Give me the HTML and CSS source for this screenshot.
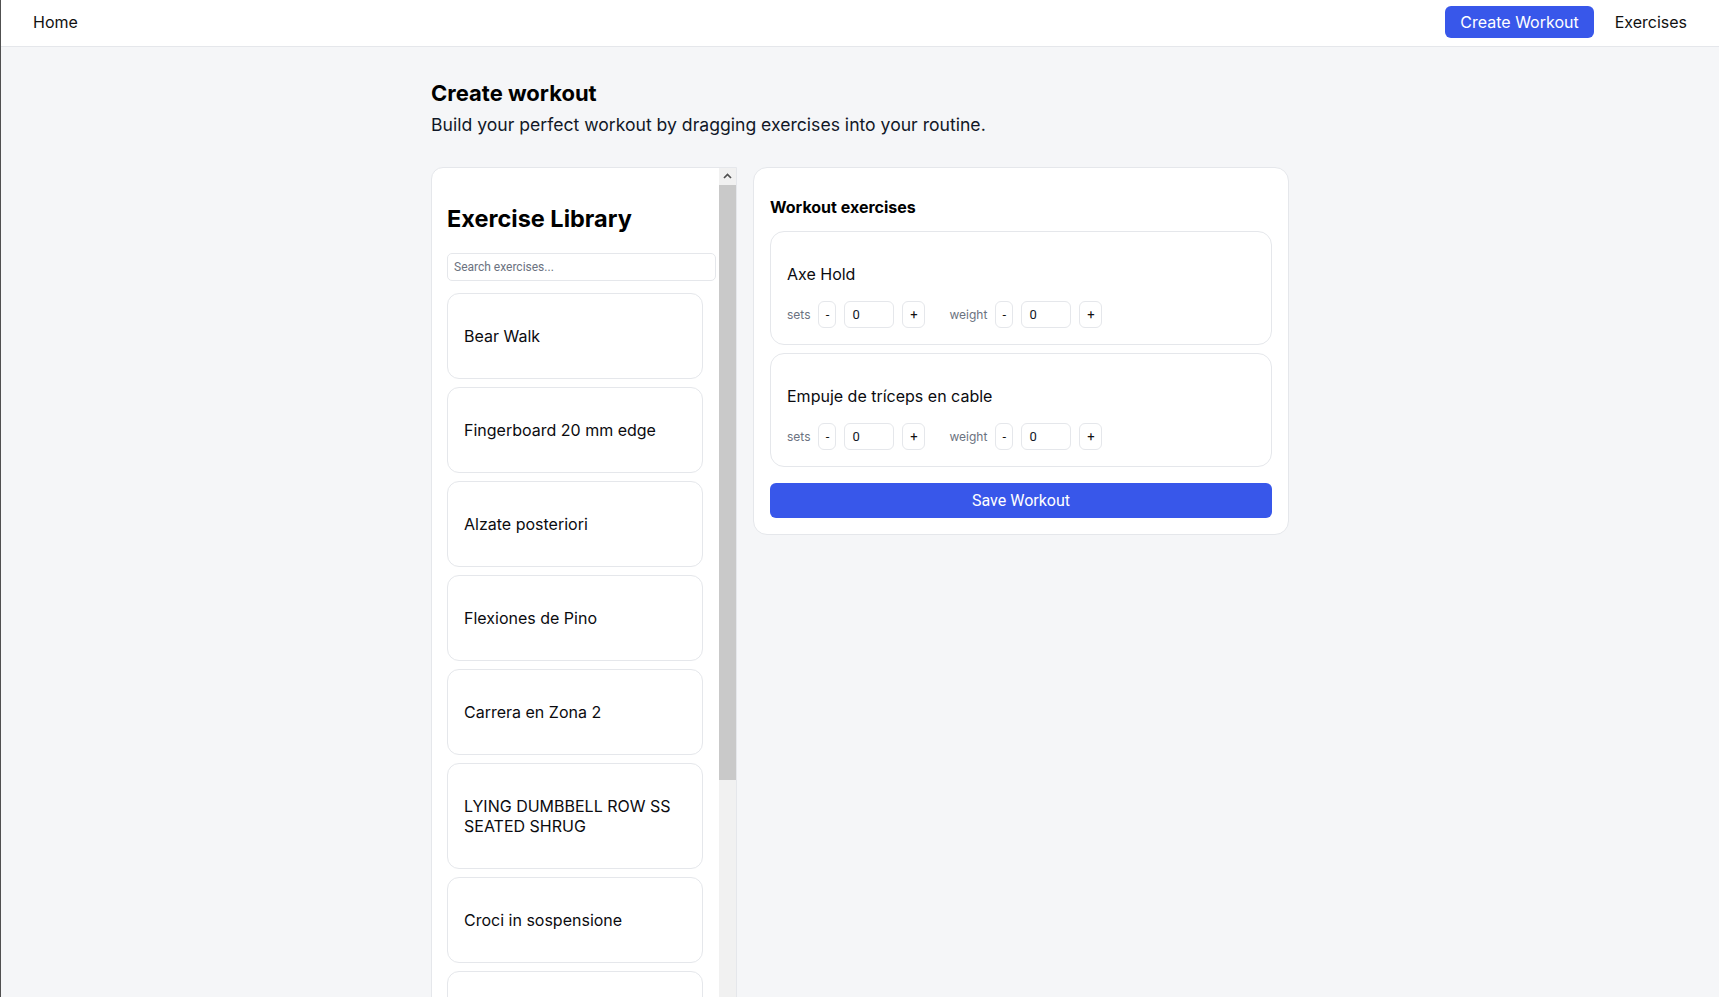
FILE: index.html
```html
<!DOCTYPE html>
<html lang="en">
<head>
<meta charset="utf-8">
<title>Create workout</title>
<link rel="stylesheet" href="styles.css">
</head>
<body>
  <header class="topbar">
    <a class="nav-link" href="#">Home</a>
    <nav class="nav-right">
      <a class="nav-cta" href="#">Create Workout</a>
      <a class="nav-link" href="#">Exercises</a>
    </nav>
  </header>

  <main class="main">
    <h1 class="page-title">Create workout</h1>
    <p class="page-sub">Build your perfect workout by dragging exercises into your routine.</p>

    <div class="builder">
      <section class="library">
        <div class="library-body">
          <h2 class="library-title">Exercise Library</h2>
          <input class="search" type="text" placeholder="Search exercises...">
          <ul class="ex-list">
            <li class="ex-item">Bear Walk</li>
            <li class="ex-item">Fingerboard 20 mm edge</li>
            <li class="ex-item">Alzate posteriori</li>
            <li class="ex-item">Flexiones de Pino</li>
            <li class="ex-item">Carrera en Zona 2</li>
            <li class="ex-item">LYING DUMBBELL ROW SS SEATED SHRUG</li>
            <li class="ex-item">Croci in sospensione</li>
            <li class="ex-item">Press militar</li>
          </ul>
        </div>
        <div class="scroll-rail" aria-hidden="true">
          <span class="scroll-btn">
            <svg width="17" height="17" viewBox="0 0 17 17"><polyline points="5,10 8.5,6.5 12,10" fill="none" stroke="#505050" stroke-width="1.7"/></svg>
          </span>
          <span class="scroll-thumb"></span>
        </div>
      </section>

      <section class="workout">
        <h3 class="workout-title">Workout exercises</h3>

        <div class="ex-card">
          <p class="ex-name">Axe Hold</p>
          <div class="controls">
            <span class="ctl-label">sets</span>
            <button class="step">-</button>
            <input class="num" type="text" value="0">
            <button class="step step-plus">+</button>
            <span class="ctl-label ctl-gap">weight</span>
            <button class="step">-</button>
            <input class="num" type="text" value="0">
            <button class="step step-plus">+</button>
          </div>
        </div>

        <div class="ex-card">
          <p class="ex-name">Empuje de tríceps en cable</p>
          <div class="controls">
            <span class="ctl-label">sets</span>
            <button class="step">-</button>
            <input class="num" type="text" value="0">
            <button class="step step-plus">+</button>
            <span class="ctl-label ctl-gap">weight</span>
            <button class="step">-</button>
            <input class="num" type="text" value="0">
            <button class="step step-plus">+</button>
          </div>
        </div>

        <button class="save">Save Workout</button>
      </section>
    </div>
  </main>
</body>
</html>
```

FILE: styles.css
```css
* {
  box-sizing: border-box;
}

html,
body {
  margin: 0;
  height: 100%;
}

body {
  font-family: Inter, "Noto Sans", sans-serif;
  background: #f5f6f8;
  color: #0b0b0f;
  border-left: 1px solid #505050;
  overflow: hidden;
}

/* top navigation */
.topbar {
  height: 47px;
  background: #fff;
  border-bottom: 1px solid #e5e7eb;
  display: flex;
  align-items: center;
  justify-content: space-between;
  padding: 0 16px 2px;
}

.nav-link {
  padding: 0 16px;
  font-size: 16px;
  color: #111;
  text-decoration: none;
}

.nav-right {
  display: flex;
  align-items: center;
  gap: 5px;
}

.nav-cta {
  display: inline-flex;
  align-items: center;
  height: 32px;
  padding: 0 15px;
  border-radius: 6px;
  background: #3857ea;
  color: #fff;
  font-size: 16px;
  text-decoration: none;
}

/* page body */
.main {
  width: 858px;
  margin: 0 auto;
  padding-top: 33px;
}

.page-title {
  margin: 0;
  font-size: 22px;
  line-height: 27px;
  font-weight: 700;
  color: #000;
}

.page-sub {
  margin: 7px 0 0;
  font-size: 17.6px;
  line-height: 21px;
  color: #111827;
}

.builder {
  display: grid;
  grid-template-columns: 306px 536px;
  gap: 16px;
  margin-top: 32px;
  align-items: start;
}

/* exercise library column */
.library {
  display: flex;
  height: 880px;
  background: #fff;
  border: 1px solid #e5e7eb;
  border-top-left-radius: 12px;
  overflow: hidden;
}

.library-body {
  flex: 1;
  min-width: 0;
  overflow: hidden;
  padding: 16px 3px 16px 15px;
}

.scroll-rail {
  width: 17px;
  flex: none;
  display: flex;
  flex-direction: column;
  background: #f1f1f1;
}

.scroll-btn {
  display: block;
  height: 17px;
}

.scroll-btn svg {
  display: block;
}

.scroll-thumb {
  display: block;
  height: 595px;
  background: #c9c9c9;
}

.library-title {
  margin: 20px 0;
  font-size: 23.5px;
  line-height: 29px;
  font-weight: 700;
  color: #000;
}

.search {
  display: block;
  width: 100%;
  height: 28px;
  margin: 0 0 12px;
  padding: 0 6px;
  border: 1px solid #e5e7eb;
  border-radius: 5px;
  font-family: Roboto, sans-serif;
  font-size: 12px;
  color: #111827;
  background: #fff;
}

.search::placeholder {
  color: #6b7280;
}

.ex-list {
  list-style: none;
  margin: 0;
  padding: 0 13px 0 0;
  display: flex;
  flex-direction: column;
  gap: 8px;
}

.ex-item {
  border: 1px solid #e5e7eb;
  border-radius: 12px;
  padding: 32px 16px;
  font-size: 16px;
  line-height: 20px;
  background: #fff;
  color: #0b0b0f;
}

/* workout column */
.workout {
  background: #fff;
  border: 1px solid #e5e7eb;
  border-radius: 14px;
  padding: 16px;
}

.workout-title {
  margin: 14px 0;
  font-size: 16px;
  line-height: 19px;
  font-weight: 700;
  color: #000;
}

.ex-card {
  border: 1px solid #e5e7eb;
  border-radius: 14px;
  padding: 16px;
  margin-bottom: 8px;
}

.ex-name {
  margin: 17px 0;
  font-size: 16px;
  line-height: 19px;
  color: #0b0b0f;
}

.controls {
  display: flex;
  align-items: center;
  gap: 8px;
  height: 27px;
}

.ctl-label {
  font-size: 12px;
  color: #6b7280;
}

.ctl-gap {
  margin-left: 16px;
}

.step {
  height: 27px;
  min-width: 18px;
  padding: 0 6px;
  border: 1px solid #e5e7eb;
  border-radius: 6px;
  background: #fff;
  font-family: Roboto, sans-serif;
  font-size: 13px;
  color: #111;
}

.step-plus {
  min-width: 23px;
}

.num {
  width: 50px;
  height: 27px;
  padding: 0 7px;
  border: 1px solid #e5e7eb;
  border-radius: 6px;
  font-family: Roboto, sans-serif;
  font-size: 13px;
  color: #111827;
}

.save {
  display: block;
  width: 100%;
  height: 35px;
  margin-top: 16px;
  border: none;
  border-radius: 6px;
  background: #3857ea;
  color: #fff;
  font-family: Roboto, sans-serif;
  font-size: 16px;
}
```
